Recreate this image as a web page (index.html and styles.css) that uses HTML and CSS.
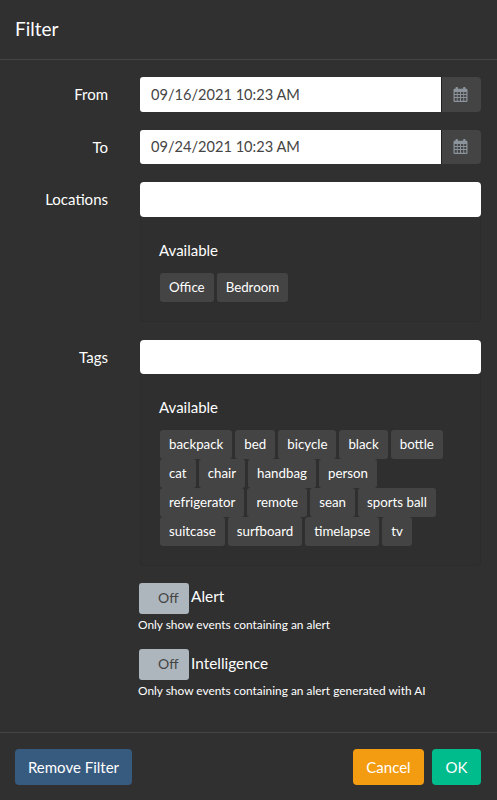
FILE: index.html
```html
<!DOCTYPE html>
<html lang="en">
<head>
<meta charset="utf-8">
<title>Filter</title>
<link rel="stylesheet" href="styles.css">
</head>
<body>
<div class="modal">
  <header class="modal-header"><h4>Filter</h4></header>
  <main class="modal-body">
    <div class="row row-date">
      <label class="label">From</label>
      <div class="control input-group">
        <div class="input">09/16/2021 10:23 AM</div>
        <button class="addon"><svg class="cal" viewBox="1 0.5 14 15"><path fill="#8b949c" fill-rule="evenodd" d="M1 3.2c0-.5.4-.9.9-.9H3V1.6C3 .8 3.500 .5 4.200 .5S5.400 .8 5.400 1.600V2.300H10.600V1.600C10.600 .8 11.100 .5 11.800 .5S13 .8 13 1.600V2.300H14.100c.5 0 .9.4.9.9V14.600c0 .5-.4.9-.9.9H1.900c-.5 0-.9-.4-.9-.9ZM2.200 5.600V7.600H4.300V5.600ZM5.200 5.600V7.600H7.500V5.600ZM8.500 5.600V7.600H10.800V5.600ZM11.700 5.600V7.600H13.800V5.600ZM2.200 8.500V10.500H4.300V8.500ZM5.200 8.500V10.500H7.500V8.500ZM8.500 8.500V10.500H10.800V8.500ZM11.700 8.500V10.500H13.800V8.500ZM2.200 11.400V14.300H4.300V11.400ZM5.200 11.400V14.300H7.500V11.400ZM8.500 11.400V14.300H10.800V11.400ZM11.700 11.400V14.300H13.800V11.400Z"/></svg></button>
      </div>
    </div>
    <div class="row row-date row-date-short">
      <label class="label">To</label>
      <div class="control input-group">
        <div class="input">09/24/2021 10:23 AM</div>
        <button class="addon"><svg class="cal" viewBox="1 0.5 14 15"><path fill="#8b949c" fill-rule="evenodd" d="M1 3.2c0-.5.4-.9.9-.9H3V1.6C3 .8 3.500 .5 4.200 .5S5.400 .8 5.400 1.600V2.300H10.600V1.600C10.600 .8 11.100 .5 11.800 .5S13 .8 13 1.600V2.300H14.100c.5 0 .9.4.9.9V14.600c0 .5-.4.9-.9.9H1.900c-.5 0-.9-.4-.9-.9ZM2.200 5.600V7.600H4.300V5.600ZM5.200 5.600V7.600H7.500V5.600ZM8.500 5.600V7.600H10.800V5.600ZM11.700 5.600V7.600H13.800V5.600ZM2.200 8.500V10.500H4.300V8.500ZM5.200 8.500V10.500H7.500V8.500ZM8.500 8.500V10.500H10.800V8.500ZM11.700 8.500V10.500H13.800V8.500ZM2.200 11.400V14.300H4.300V11.400ZM5.200 11.400V14.300H7.500V11.400ZM8.500 11.400V14.300H10.800V11.400ZM11.700 11.400V14.300H13.800V11.400Z"/></svg></button>
      </div>
    </div>
    <div class="row">
      <label class="label">Locations</label>
      <div class="control">
        <div class="input input-full"></div>
        <div class="panel">
          <h5>Available</h5>
          <div class="tags">
            <span class="tag">Office</span><span class="tag">Bedroom</span>
          </div>
        </div>
      </div>
    </div>
    <div class="row row-tags">
      <label class="label">Tags</label>
      <div class="control">
        <div class="input input-full input-short"></div>
        <div class="panel">
          <h5>Available</h5>
          <div class="tags">
            <span class="tag">backpack</span><span class="tag">bed</span><span class="tag">bicycle</span><span class="tag">black</span><span class="tag">bottle</span>
            <span class="tag">cat</span><span class="tag">chair</span><span class="tag">handbag</span><span class="tag">person</span>
            <span class="tag">refrigerator</span><span class="tag">remote</span><span class="tag">sean</span><span class="tag">sports ball</span>
            <span class="tag">suitcase</span><span class="tag">surfboard</span><span class="tag">timelapse</span><span class="tag">tv</span>
          </div>
        </div>
      </div>
    </div>
    <div class="toggle-block">
      <div class="toggle-line"><span class="switch">Off</span><span class="toggle-label">Alert</span></div>
      <p class="help">Only show events containing an alert</p>
    </div>
    <div class="toggle-block">
      <div class="toggle-line"><span class="switch">Off</span><span class="toggle-label toggle-label-low">Intelligence</span></div>
      <p class="help">Only show events containing an alert generated with AI</p>
    </div>
  </main>
  <footer class="modal-footer">
    <button class="btn btn-blue">Remove Filter</button>
    <div class="footer-right">
      <button class="btn btn-orange">Cancel</button>
      <button class="btn btn-green">OK</button>
    </div>
  </footer>
</div>
</body>
</html>
```
FILE: styles.css
```css
* { box-sizing: border-box; }
html, body { margin: 0; height: 100%; }
body { background: #303030; color: #fff; font-family: Lato, "Liberation Sans", sans-serif; font-size: 15px; overflow: hidden; }
.modal { height: 800px; display: flex; flex-direction: column; }
.modal-header { height: 60px; padding: 0 15px 2px; border-bottom: 1px solid #444; display: flex; align-items: center; }
.modal-header h4 { margin: 0; font-size: 19px; font-weight: 400; line-height: 1; }
.modal-body { flex: 1; padding: 17px 16px 0 15px; }
.row { display: flex; margin-bottom: 18px; }
.label { width: 93px; text-align: right; padding-top: 7px; line-height: 20px; font-weight: 400; flex: none; }
.control { margin-left: 32px; flex: 1; min-width: 0; }
.input-group { display: flex; }
.input { background: #fff; color: #464545; height: 35px; padding: 0 11px; line-height: 35px; border-radius: 3px 0 0 3px; flex: 1; font-size: 14.6px; }
.input-full { border-radius: 4px; }
.input-short { height: 34px; }
.row-date { height: 35px; }
.row-date-short { height: 34px; }
.row-date-short .input, .row-date-short .addon { height: 34px; line-height: 34px; }
.addon { width: 40px; height: 35px; padding: 0 2px 1px 0; background: #444; border: 0; border-left: 1px solid #222; border-radius: 0 4px 4px 0; display: flex; align-items: center; justify-content: center; }
.cal { width: 15px; height: 15px; display: block; }
.panel { background: #2f2f2f; border: 1px solid #2c2c2c; border-top: 0; border-radius: 0 0 4px 4px; padding: 19px; }
.panel h5 { margin: 0 0 7px -1px; font-size: 15px; font-weight: 400; line-height: 28px; height: 30px; }
.tags { display: flex; flex-wrap: wrap; column-gap: 3px; }
.tag { background: #444; color: #fff; font-size: 13.3px; line-height: 19px; padding: 5px 9px; border-radius: 3px; height: 29px; white-space: nowrap; }
.row-tags { margin-bottom: 17px; }
.toggle-block { margin-bottom: 17px; padding-left: 124px; }
.toggle-line { display: flex; align-items: flex-start; }
.switch { width: 50px; height: 31px; background: #adb5bd; color: #444; border-radius: 3px; font-size: 14px; line-height: 29px; padding-left: 19px; flex: none; margin-right: 2px; }
.toggle-label { font-size: 15.4px; line-height: 27px; }
.toggle-label-low { line-height: 29px; }
.help { margin: 3px 0 0 -1px; font-size: 11.9px; line-height: 15px; white-space: nowrap; }
.modal-footer { height: 68px; border-top: 1px solid #444; padding: 16px 16px 0 15px; display: flex; justify-content: space-between; align-items: flex-start; }
.footer-right { display: flex; gap: 8px; }
.btn { height: 36px; border: 0; color: #fff; font-family: inherit; font-size: 15px; border-radius: 4px; padding: 0; white-space: nowrap; }
.btn-blue { background: #375a7f; width: 117px; }
.btn-orange { background: #f39c12; width: 71px; }
.btn-green { background: #00bc8c; width: 49px; }
```
